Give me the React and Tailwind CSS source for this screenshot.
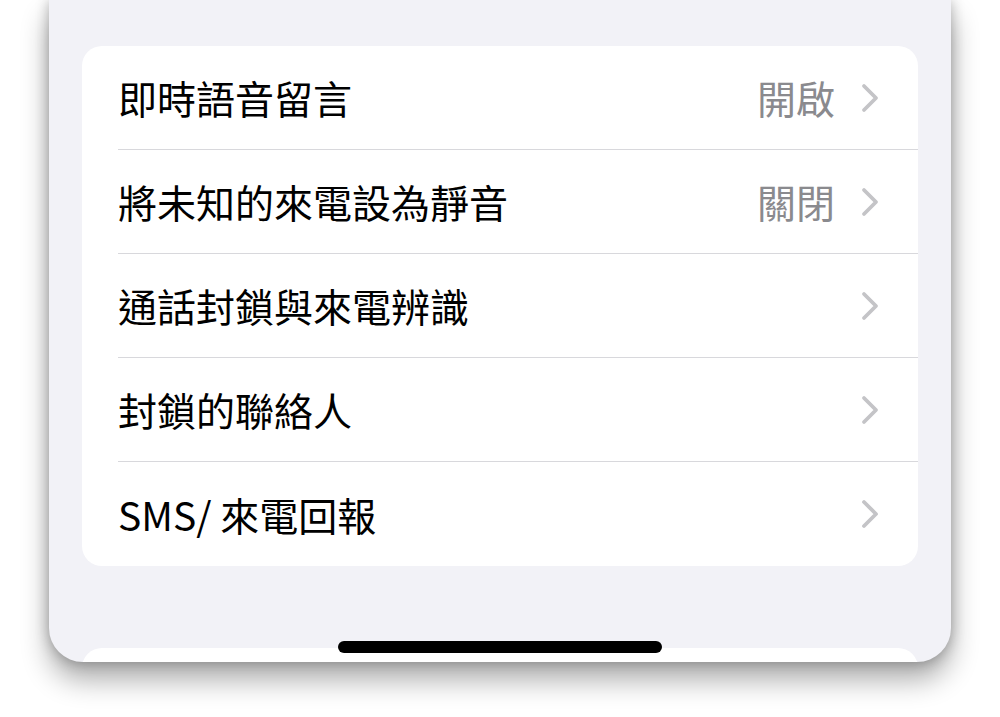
const rows = [
  { label: '即時語音留言', value: '開啟' },
  { label: '將未知的來電設為靜音', value: '關閉' },
  { label: '通話封鎖與來電辨識' },
  { label: '封鎖的聯絡人' },
  { label: 'SMS/ 來電回報' },
]

function Chevron() {
  return (
    <svg width="19" height="30" viewBox="0 0 19 30" fill="none" className="shrink-0">
      <path d="M3 3l12 12L3 27" stroke="#c4c4c7" strokeWidth="3.8" strokeLinecap="round" strokeLinejoin="round" />
    </svg>
  )
}

export default function App() {
  return (
    <div
      className="w-[1000px] h-[717px] bg-white overflow-hidden"
      style={{ fontFamily: "'Noto Sans CJK TC', 'Noto Sans', sans-serif" }}
    >
      <div className="relative ml-[49px] w-[902px] h-[662px] bg-[#f2f2f7] rounded-b-[34px] overflow-hidden shadow-[0_18px_28px_rgba(0,0,0,0.32),0_0_14px_rgba(0,0,0,0.28)]">
        <div className="pt-[46px] px-[33px] flex flex-col">
          {/* Settings group */}
          <div className="bg-white rounded-[20px] overflow-hidden">
            {rows.map((row, i) => (
              <div key={row.label} className="pl-[36px]">
                <div
                  className={`h-[104px] flex items-center pr-[38px] ${
                    i < rows.length - 1 ? 'border-b border-[#d8d8dc]' : ''
                  }`}
                >
                  <span className="flex-1 text-[39px] leading-none text-black">{row.label}</span>
                  {row.value && (
                    <span className="text-[39px] leading-none text-[#8a8a8e] mr-[26px]">{row.value}</span>
                  )}
                  <Chevron />
                </div>
              </div>
            ))}
          </div>

          {/* Next group peeking in */}
          <div className="mt-[82px] h-[60px] bg-white rounded-t-[20px]" />
        </div>

        {/* Home indicator */}
        <div className="absolute left-[289px] top-[641px] w-[324px] h-[12px] rounded-full bg-black" />
      </div>
    </div>
  )
}
